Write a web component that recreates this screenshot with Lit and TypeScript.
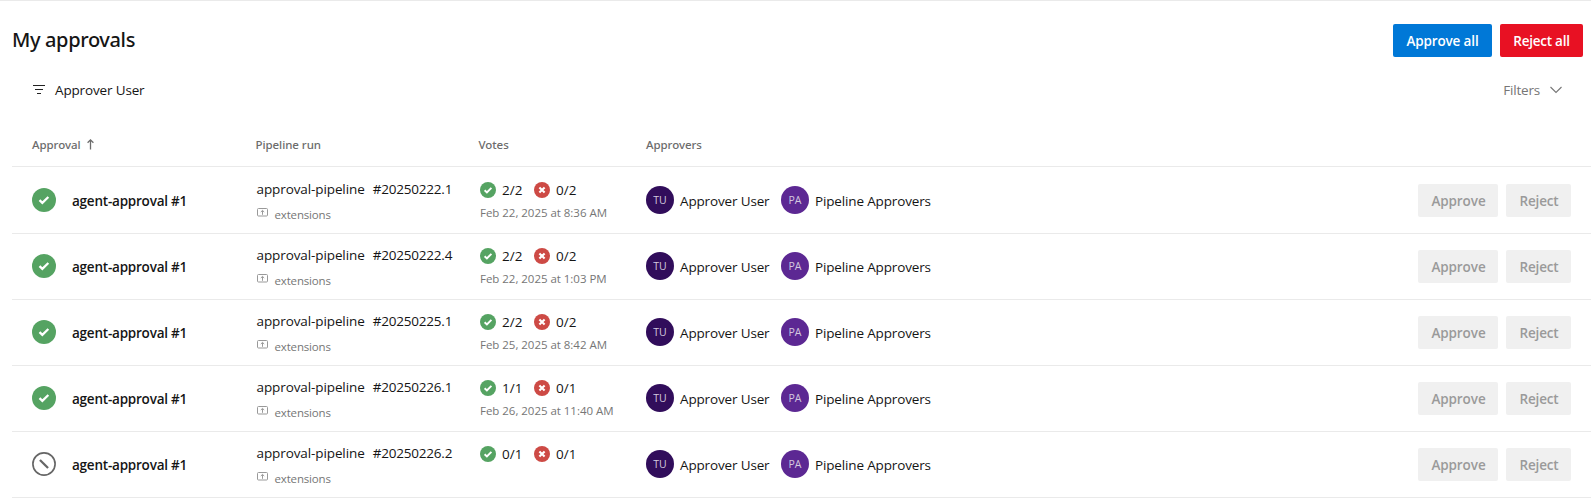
import { LitElement, html, css, svg } from "lit";
import { customElement, property } from "lit/decorators.js";

type Run = { run: string; yes: string; no: string; date: string; skipped?: boolean };

const RUNS: Run[] = [
  { run: "#20250222.1", yes: "2/2", no: "0/2", date: "Feb 22, 2025 at 8:36 AM" },
  { run: "#20250222.4", yes: "2/2", no: "0/2", date: "Feb 22, 2025 at 1:03 PM" },
  { run: "#20250225.1", yes: "2/2", no: "0/2", date: "Feb 25, 2025 at 8:42 AM" },
  { run: "#20250226.1", yes: "1/1", no: "0/1", date: "Feb 26, 2025 at 11:40 AM" },
  { run: "#20250226.2", yes: "0/1", no: "0/1", date: "", skipped: true },
];

@customElement("status-icon")
export class StatusIcon extends LitElement {
  @property() kind = "success";
  @property({ type: Number }) size = 16;

  static styles = css`
    :host { display: block; flex: none; }
    svg { display: block; }
  `;

  render() {
    const check = this.size > 16 ? "M5 8.1 6.900 9.900 10.900 6" : "M4.600 8.200 6.900 10.400 11.400 5.800";
    const shape =
      this.kind === "success"
        ? svg`<circle cx="8" cy="8" r="8" fill="#55a362"/><path d=${check} fill="none" stroke="#fff" stroke-width=${this.size > 16 ? 1.5 : 1.9}/>`
        : this.kind === "failed"
        ? svg`<circle cx="8" cy="8" r="8" fill="#cd4a45"/><path d="M5.400 5.400l5.200 5.200M10.600 5.400l-5.200 5.200" fill="none" stroke="#fff" stroke-width="2.1"/>`
        : svg`<circle cx="8" cy="8" r="7.400" fill="#fff" stroke="#666" stroke-width="1.1"/><path d="M5.300 5.300l5.400 5.400" fill="none" stroke="#666" stroke-width="1.500"/>`;
    return html`<svg width=${this.size} height=${this.size} viewBox="0 0 16 16">${shape}</svg>`;
  }
}

@customElement("approval-row")
export class ApprovalRow extends LitElement {
  @property({ attribute: false }) item!: Run;

  static styles = css`
    :host {
      display: grid;
      grid-template-columns: 223px 223px 168px 1fr auto;
      height: 65px;
      padding: 0 20px 0 20px;
      border-bottom: 1px solid #eaeaea;
    }
    .name { display: flex; gap: 16px; padding-top: 20px; }
    .name b { font-weight: 600; line-height: 20px; margin-top: 3px; letter-spacing: -0.22px; }
    .run { padding: 11px 0 0 4px; margin-left: -2.5px; }
    .title { display: flex; gap: 8px; line-height: 20px; letter-spacing: -0.1px; }
    .num { letter-spacing: -0.2px; }
    .branch { display: flex; gap: 7px; margin-top: 8px; line-height: 16px; font-size: 11.5px; color: #767676; letter-spacing: -0.16px; }
    .branch svg { margin-top: 1px; flex: none; }
    .votes { padding: 14px 0 0 2px; }
    .counts { display: flex; height: 16px; }
    .counts span { line-height: 20px; margin-top: -2px; padding-left: 6px; width: 32px; }
    .date { font-size: 11.5px; line-height: 16px; margin-top: 7px; color: #767676; letter-spacing: -0.03px; }
    .people { display: flex; padding-top: 18px; }
    .avatar { width: 28px; height: 28px; border-radius: 50%; background: #310d5b; color: #d3c9df; font-size: 10.5px; line-height: 28px; text-align: center; }
    .avatar.group { background: #5c2893; }
    .person { line-height: 20px; margin-top: 5px; padding-left: 6px; width: 101px; letter-spacing: -0.15px; white-space: nowrap; }
    .actions { display: flex; gap: 8px; padding-top: 16px; }
    button { height: 33px; border: 0; border-radius: 2px; padding: 1px 0 0 1px; font: inherit; font-weight: 600; background: #f0f0f0; color: #9a9a9a; letter-spacing: -0.08px; }
    .ok { width: 80px; }
    .no { width: 65px; letter-spacing: -0.15px; }
  `;

  render() {
    const r = this.item;
    return html`
      <div class="name">
        <status-icon kind=${r.skipped ? "skipped" : "success"} size="24"></status-icon>
        <b>agent-approval #1</b>
      </div>
      <div class="run">
        <div class="title"><span>approval-pipeline</span><span class="num">${r.run}</span></div>
        <div class="branch">
          <svg width="11" height="9" viewBox="0 0 11 9" fill="none" stroke="#999" stroke-width="1"><rect x=".5" y=".5" width="10" height="7.5" rx="1"/><path d="M5.500 6.800V2.600M3.800 4 5.500 2.400 7.200 4"/></svg>
          <span>extensions</span>
        </div>
      </div>
      <div class="votes">
        <div class="counts">
          <status-icon kind="success"></status-icon><span>${r.yes}</span>
          <status-icon kind="failed"></status-icon><span>${r.no}</span>
        </div>
        <div class="date">${r.date}</div>
      </div>
      <div class="people">
        <div class="avatar">TU</div><div class="person">Approver User</div>
        <div class="avatar group">PA</div><div class="person">Pipeline Approvers</div>
      </div>
      <div class="actions">
        <button class="ok" disabled>Approve</button><button class="no" disabled>Reject</button>
      </div>`;
  }
}

@customElement("app-root")
export class AppRoot extends LitElement {
  static styles = css`
    :host {
      display: block;
      height: 498px;
      overflow: hidden;
      box-sizing: border-box;
      border-top: 1px solid #eaeaea;
      background: #fff;
      color: #151515;
      font: 13.5px "Open Sans", sans-serif;
    }
    header { display: flex; justify-content: space-between; height: 61px; padding: 23px 8px 0 12px; box-sizing: border-box; }
    h1 { margin: 2px 0 0; font: 500 20px/28px "Noto Sans", sans-serif; letter-spacing: -0.36px; }
    .bulk { display: flex; gap: 8px; }
    button { height: 33px; border: 0; border-radius: 2px; padding: 1px 0 0; font: inherit; font-weight: 600; color: #fff; letter-spacing: -0.15px; }
    .approve { width: 99px; background: #0078d7; }
    .reject { width: 83px; background: #e81123; letter-spacing: -0.24px; }
    .filter { display: flex; align-items: center; height: 56px; padding: 0 29px 0 33px; line-height: 20px; }
    .filter .who { margin-left: 10px; flex: 1; letter-spacing: -0.15px; }
    .filter .more { color: #767676; margin-right: 10px; letter-spacing: -0.2px; }
    .heads { display: grid; grid-template-columns: 223.5px 223px 167.5px 1fr; height: 49px; padding: 18px 0 0 20px; box-sizing: border-box; margin: 0 0 1px 12px; border-bottom: 1px solid #eaeaea; color: #6c6c6c; font: 500 11.5px/18px "Noto Sans", sans-serif; letter-spacing: -0.06px; }
    .sort { display: flex; gap: 6.500px; }
    .sort svg { margin-top: 2.5px; }
    approval-row { margin-left: 12px; }
  `;

  render() {
    return html`
      <header>
        <h1>My approvals</h1>
        <div class="bulk"><button class="approve">Approve all</button><button class="reject">Reject all</button></div>
      </header>
      <div class="filter">
        <svg width="12" height="10" viewBox="0 0 12 10" stroke="#222" stroke-width="1"><path d="M0 .5h12M2 4.500h8M4 8.500h4"/></svg>
        <span class="who">Approver User</span>
        <span class="more">Filters</span>
        <svg width="12" height="8" viewBox="0 0 12 8" fill="none" stroke="#767676" stroke-width="1.1"><path d="M.5 1 6 6.500 11.500 1"/></svg>
      </div>
      <div class="heads">
        <div class="sort">Approval<svg width="7" height="11" viewBox="0 0 7 11" fill="none" stroke="#6c6c6c" stroke-width="1.300"><path d="M3.500 10.500V1M.6 3.700 3.500 .9 6.400 3.700"/></svg></div>
        <div>Pipeline run</div>
        <div>Votes</div>
        <div>Approvers</div>
      </div>
      ${RUNS.map((r) => html`<approval-row .item=${r}></approval-row>`)}`;
  }
}
